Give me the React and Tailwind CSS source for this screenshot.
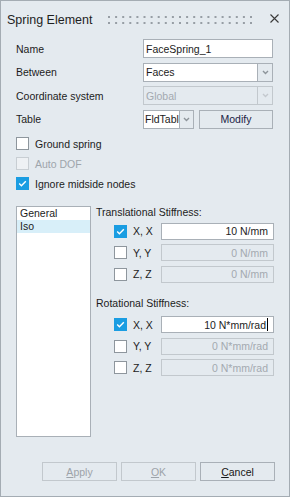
import React from "react";

const font = { fontFamily: '"Liberation Sans", Arial, sans-serif' };

function Chevron({ disabled }) {
  return (
    <svg width="7" height="5" viewBox="0 0 7 5">
      <path
        d="M1 1l2.5 2.5L6 1"
        stroke={disabled ? "#c4c9ce" : "#8d949a"}
        strokeWidth="1.4"
        fill="none"
      />
    </svg>
  );
}

function CheckBox({ checked, disabled }) {
  if (checked)
    return (
      <span className="w-[13px] h-[13px] bg-[#1a9de2] flex items-center justify-center shrink-0">
        <svg width="9" height="7" viewBox="0 0 9 7">
          <path d="M1.2 3.6l2.2 2.1L7.8 1.2" stroke="white" strokeWidth="1.4" fill="none" />
        </svg>
      </span>
    );
  return (
    <span
      className={`w-[13px] h-[13px] border shrink-0 ${
        disabled ? "border-[#c8ced3] bg-[#eef1f4]" : "border-[#8e969d] bg-white"
      }`}
    />
  );
}

function Grip() {
  const dots = [];
  for (let i = 0; i < 21; i++) {
    dots.push(<rect key={"a" + i} x={i * 7.1} y="0" width="2" height="2" fill="#979ea5" />);
    dots.push(<rect key={"b" + i} x={i * 7.1} y="6" width="2" height="2" fill="#979ea5" />);
  }
  return (
    <svg width="144" height="8" viewBox="0 0 144 8">
      {dots}
    </svg>
  );
}

function FormRow({ label, children }) {
  return (
    <div className="flex items-center h-[19px]">
      <span className="w-[127px] shrink-0">{label}</span>
      <div className="flex-1 flex h-full">{children}</div>
    </div>
  );
}

function Select({ value, disabled }) {
  return (
    <div
      className={`flex-1 flex h-full border ${
        disabled ? "border-[#c2c8cd]" : "border-[#a9b0b7]"
      }`}
    >
      <div
        className={`flex-1 flex items-center pl-[2px] ${
          disabled ? "text-[#a3a9af]" : "bg-white"
        }`}
      >
        {value}
      </div>
      <div
        className={`w-[15px] flex items-center justify-center border-l ${
          disabled ? "border-[#c2c8cd]" : "border-[#a9b0b7]"
        }`}
      >
        <Chevron disabled={disabled} />
      </div>
    </div>
  );
}

function StiffRow({ label, value, checked }) {
  return (
    <div className="flex items-center h-[17px] pl-[18px]">
      <CheckBox checked={checked} />
      <span className="ml-[6px] w-[28px] shrink-0">{label}</span>
      <div
        className={`flex-1 h-full border flex items-center justify-end pr-[5px] ${
          checked ? "bg-white border-[#a9b0b7]" : "border-[#c2c8cd] text-[#a3a9af]"
        }`}
      >
        {value}
      </div>
    </div>
  );
}

function Button({ children, disabled }) {
  return (
    <div
      className={`w-[75px] h-[19px] border flex items-center justify-center ${
        disabled ? "border-[#c2c8cd] text-[#9da3a9]" : "border-[#a9b0b7] text-[#151515]"
      }`}
    >
      {children}
    </div>
  );
}

export default function App() {
  return (
    <div
      style={font}
      className="w-[290px] h-[497px] border border-[#a4acb3] bg-[#e4eaef] text-[#1c1c1c] text-[10.5px] leading-[14px] flex flex-col"
    >
      {/* Title bar */}
      <div className="h-[38px] flex items-center pl-[6px] pr-[10px] shrink-0">
        <span className="text-[12.5px] text-[#1e1e1e]">Spring Element</span>
        <div className="ml-[16px] mt-[-1px] flex-1">
          <Grip />
        </div>
        <svg width="9" height="9" viewBox="0 0 9 9" className="mt-[-3px]">
          <path d="M0.5 0.5l8 8M8.5 0.5l-8 8" stroke="#3a3a3a" strokeWidth="1.1" />
        </svg>
      </div>

      {/* Form */}
      <div className="flex flex-col gap-[4.5px] pl-[15px] pr-[16px]">
        <FormRow label="Name">
          <div className="flex-1 h-full border border-[#a9b0b7] bg-white flex items-center pl-[2px]">
            FaceSpring_1
          </div>
        </FormRow>
        <FormRow label="Between">
          <Select value="Faces" />
        </FormRow>
        <FormRow label="Coordinate system">
          <Select value="Global" disabled />
        </FormRow>
        <FormRow label="Table">
          <div className="w-[51px] flex h-full border border-[#a9b0b7]">
            <div className="w-[35px] bg-white flex items-center pl-[1px] overflow-hidden whitespace-nowrap">
              FldTable
            </div>
            <div className="flex-1 flex items-center justify-center border-l border-[#a9b0b7]">
              <Chevron />
            </div>
          </div>
          <div className="ml-[5px] flex-1 h-full border border-[#a9b0b7] flex items-center justify-center text-[#1b1d45]">
            Modify
          </div>
        </FormRow>
      </div>

      {/* Checkboxes */}
      <div className="mt-[5px] pl-[15px] flex flex-col">
        <div className="h-[20px] flex items-center">
          <CheckBox />
          <span className="ml-[6px]">Ground spring</span>
        </div>
        <div className="h-[20px] flex items-center">
          <CheckBox disabled />
          <span className="ml-[6px] text-[#9ea5ab]">Auto DOF</span>
        </div>
        <div className="h-[20px] flex items-center">
          <CheckBox checked />
          <span className="ml-[6px]">Ignore midside nodes</span>
        </div>
      </div>

      {/* Lower section */}
      <div className="mt-[12px] h-[231.5px] flex pl-[15px] pr-[15px]">
        <div className="w-[75px] h-full border border-[#a9b0b7] bg-white flex flex-col leading-[13px]">
          <div className="h-[13px] pl-[3px]">General</div>
          <div className="h-[13px] pl-[3px] bg-[#d8eff9]">Iso</div>
        </div>
        <div className="ml-[5px] flex-1 flex flex-col">
          <div className="h-[14px] mt-[-1px]">Translational Stiffness:</div>
          <div className="mt-[4px] flex flex-col gap-[4.5px]">
            <StiffRow label="X, X" value="10 N/mm" checked />
            <StiffRow label="Y, Y" value="0 N/mm" />
            <StiffRow label="Z, Z" value="0 N/mm" />
          </div>
          <div className="h-[14px] mt-[13.5px]">Rotational Stiffness:</div>
          <div className="mt-[6px] flex flex-col gap-[4.5px]">
            <StiffRow
              label="X, X"
              value={
                <span className="flex items-center">
                  10 N*mm/rad
                  <span className="ml-[1px] w-[1px] h-[13px] bg-black" />
                </span>
              }
              checked
            />
            <StiffRow label="Y, Y" value="0 N*mm/rad" />
            <StiffRow label="Z, Z" value="0 N*mm/rad" />
          </div>
        </div>
      </div>

      {/* Buttons */}
      <div className="mt-[25px] flex justify-end gap-[4px] pr-[14px]">
        <Button disabled>
          <span className="underline underline-offset-[1px]">A</span>pply
        </Button>
        <Button disabled>
          <span className="underline underline-offset-[1px]">O</span>K
        </Button>
        <Button>
          <span className="underline underline-offset-[1px]">C</span>ancel
        </Button>
      </div>
    </div>
  );
}
